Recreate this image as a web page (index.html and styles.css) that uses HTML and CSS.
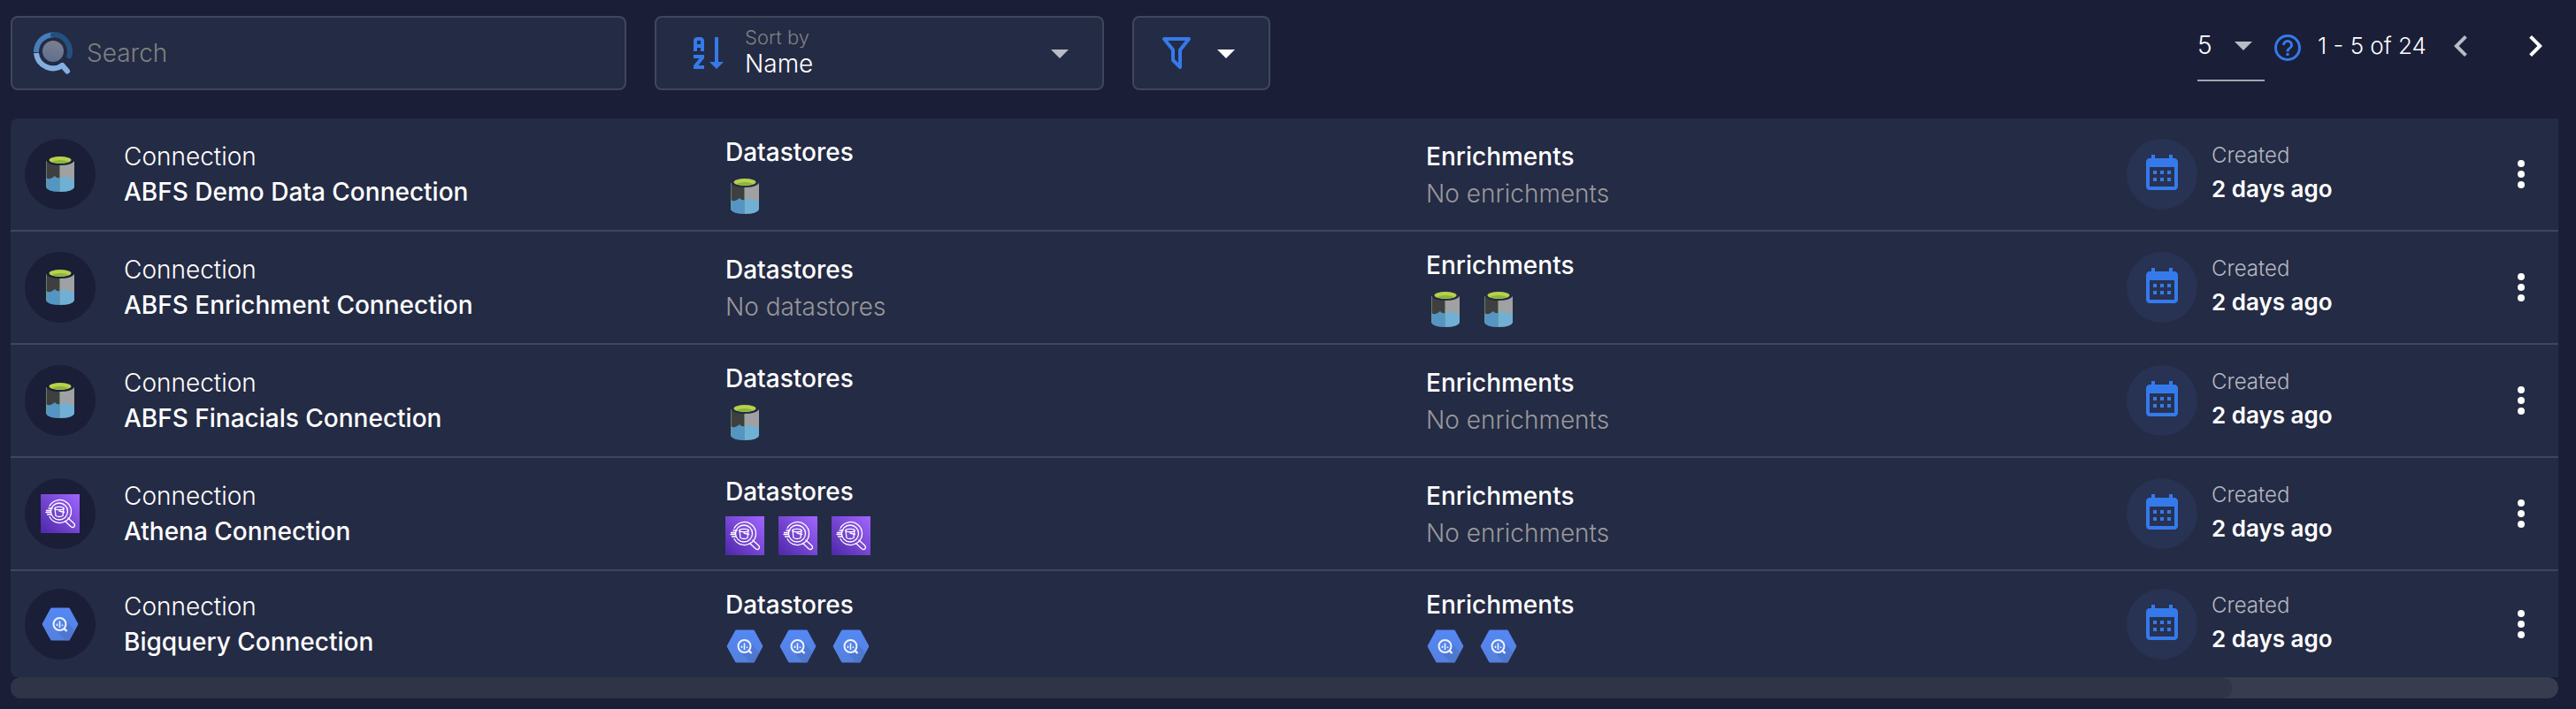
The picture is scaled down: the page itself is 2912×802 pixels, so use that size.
FILE: index.html
```html
<!DOCTYPE html>
<html lang="en">
<head>
<meta charset="utf-8">
<title>Connections</title>
<link rel="stylesheet" href="styles.css">
</head>
<body>
<svg class="defs" aria-hidden="true">
  <defs>
    <linearGradient id="athena-bg" x1="0" y1="1" x2="1" y2="0">
      <stop offset="0" stop-color="#4d27a8"/><stop offset="1" stop-color="#a166ff"/>
    </linearGradient>
    <linearGradient id="lens" x1="0.6" y1="0" x2="0.4" y2="1">
      <stop offset="0" stop-color="#7c7f8d"/><stop offset="1" stop-color="#5c7091"/>
    </linearGradient>
    <linearGradient id="bq-bg" x1="0" y1="0" x2="0" y2="1">
      <stop offset="0" stop-color="#5488f5"/><stop offset="1" stop-color="#5580dd"/>
    </linearGradient>
    <symbol id="abfs" viewBox="0 0 44 44">
      <path fill="#3f3f3f" d="M6 7Q9 12 22 12V28H6z"/>
      <path fill="#a0a1a2" d="M38 7Q35 12 22 12V28H38z"/>
      <path fill="#5595c4" d="M6 26Q9 28 11 27Q14 26 16 24Q18 27 22 26V42Q8 42 6 37z"/>
      <path fill="#70b0d5" d="M22 26Q25 26 28 24Q30 26 33 27Q35 28 38 26V37Q36 42 22 42z"/>
      <path fill="none" stroke="#6f9f80" stroke-opacity=".7" d="M6.500 7V37M21.500 12V41"/>
      <ellipse cx="22" cy="6" rx="12.500" ry="4" fill="#b9d04c"/>
      <path fill="#87b63c" d="M13 7.500Q22 4.500 31 7.500Q28 9.500 22 9.500Q16 9.500 13 7.500z"/>
    </symbol>
    <symbol id="athena" viewBox="0 0 44 44">
      <path fill="url(#athena-bg)" d="M0 0h44v44H0z"/>
      <g fill="none" stroke="#fff" stroke-width="1.300" stroke-linecap="round" stroke-linejoin="round">
        <path d="M10 13.500A13 13 0 1 1 10 25.500M9 16H13M6.500 18.500H11.500M6 20.500H11M7.500 23H12"/>
        <circle cx="21" cy="19.500" r="9.500"/>
        <ellipse cx="21" cy="16" rx="5" ry="1.700"/>
        <path d="M16 16L17 24.500Q21 26.500 25 24.500L26 16M21 19L26.500 20.500M27.500 30.500L34.500 37Q37.500 38.500 38.500 35.500Q38.500 34 37.500 33L31 27"/>
      </g>
    </symbol>
    <symbol id="bigquery" viewBox="0 0 44 38">
      <path fill="url(#bq-bg)" d="M12.500.500H31.500Q32.500.500 33 1.500L42 18Q42.500 19 42 20L33 36.500Q32.500 37.500 31.500 37.500H12.500Q11.500 37.500 11 36.500L2 20Q1.500 19 2 18L11 1.500Q11.500.500 12.500.500z"/>
      <path fill="#4b73c9" fill-opacity=".7" d="M27 13L38.500 26.500L32.500 37.500H28L17 25z"/>
      <circle cx="21.500" cy="19" r="7" fill="#5484e8" stroke="#eef3ff" stroke-width="2"/>
      <path fill="none" stroke="#eef3ff" stroke-width="1.600" d="M18.500 18.500V21M21.500 15.500V23M24.500 19.500V21"/>
      <path stroke="#eef3ff" stroke-width="2.400" d="M26.500 24L29.500 27"/>
    </symbol>
    <symbol id="calendar" viewBox="0 0 24 24">
      <path fill="currentColor" d="M9 10V12H7V10H9M13 10V12H11V10H13M17 10V12H15V10H17M19 3C20.100 3 21 3.900 21 5V19C21 20.100 20.100 21 19 21H5C3.900 21 3 20.100 3 19V5C3 3.900 3.900 3 5 3H6V1H8V3H16V1H18V3H19M19 19V8H5V19H19M9 14V16H7V14H9M13 14V16H11V14H13M17 14V16H15V14H17Z"/>
    </symbol>
    <symbol id="dots" viewBox="0 0 24 24">
      <path fill="currentColor" d="M12 16A2 2 0 1 1 12 20A2 2 0 0 1 12 16M12 10A2 2 0 1 1 12 14A2 2 0 0 1 12 10M12 4A2 2 0 1 1 12 8A2 2 0 0 1 12 4Z"/>
    </symbol>
    <symbol id="caret" viewBox="0 0 24 24"><path fill="currentColor" d="M7 10L12 15L17 10H7Z"/></symbol>
  </defs>
</svg>

<header class="toolbar">
  <label class="field search">
    <svg class="search-icon" viewBox="0 0 44 48" aria-hidden="true">
      <g fill="none" stroke-width="6" stroke-linecap="round" stroke-linejoin="round">
        <path stroke="#24507f" d="M22 3A19 19 0 0 1 40.200 27.500"/>
        <path stroke="#477db8" stroke-linecap="butt" d="M3 23A19 19 0 0 1 22 3.500"/>
        <path stroke="#84afe1" stroke-linecap="butt" d="M3 24A19 19 0 0 0 33 37.600"/>
        <path stroke="#84afe1" d="M32.500 38L38 44.500"/>
      </g>
      <circle cx="22" cy="3.500" r="3" fill="#24507f"/>
      <circle cx="22" cy="22" r="12" fill="url(#lens)"/>
    </svg>
    <input class="search-input" type="text" placeholder="Search" aria-label="Search">
  </label>

  <div class="field sort">
    <svg class="icon blue" viewBox="0 0 24 24" aria-hidden="true"><path fill="currentColor" d="M19 17H22L18 21L14 17H17V3H19V17M11 13V15L7.670 19H11V21H5V19L8.330 15H5V13H11M9 3H7C5.900 3 5 3.900 5 5V11H7V9H9V11H11V5C11 3.900 10.100 3 9 3M9 7H7V5H9V7Z"/></svg>
    <div class="sort-text">
      <label class="sort-label" for="sort">Sort by</label>
      <select class="plain-select" id="sort"><option>Name</option></select>
    </div>
    <svg class="icon muted" aria-hidden="true"><use href="#caret"/></svg>
  </div>

  <button class="field filter" type="button" aria-label="Filter">
    <svg class="funnel blue" viewBox="0 0 32 36" aria-hidden="true"><path fill="none" stroke="currentColor" stroke-width="4" stroke-linejoin="round" d="M2 2H30L20 14.500V34L12 26V14.500z"/></svg>
    <svg class="icon" aria-hidden="true"><use href="#caret"/></svg>
  </button>

  <nav class="pager" aria-label="Pagination">
    <div class="page-size">
      <select class="plain-select" aria-label="Rows per page"><option>5</option></select>
      <svg class="icon size-caret" aria-hidden="true"><use href="#caret"/></svg>
    </div>
    <svg class="help blue" viewBox="0 0 24 24" aria-hidden="true"><path fill="currentColor" d="M11 18H13V16H11V18M12 2A10 10 0 0 0 2 12A10 10 0 0 0 12 22A10 10 0 0 0 22 12A10 10 0 0 0 12 2M12 20C7.590 20 4 16.410 4 12S7.590 4 12 4S20 7.590 20 12S16.410 20 12 20M12 6A4 4 0 0 0 8 10H10A2 2 0 0 1 12 8A2 2 0 0 1 14 10C14 12 11 11.750 11 15H13C13 12.750 16 12.500 16 10A4 4 0 0 0 12 6Z"/></svg>
    <span class="range">1 - 5 of 24</span>
    <button class="icon-button muted" type="button" aria-label="Previous page"><svg class="icon" viewBox="0 0 24 24"><path fill="currentColor" d="M15.410 16.580L10.830 12L15.410 7.410L14 6L8 12L14 18L15.410 16.580Z"/></svg></button>
    <button class="icon-button next" type="button" aria-label="Next page"><svg class="icon" viewBox="0 0 24 24"><path fill="currentColor" d="M8.590 16.580L13.170 12L8.590 7.410L10 6L16 12L10 18L8.590 16.580Z"/></svg></button>
  </nav>
</header>

<main class="list">
  <table class="connections">
    <tbody id="rows"></tbody>
  </table>
  <div class="scrollbar"><div class="thumb"></div></div>
</main>
<script src="app.js"></script>
</body>
</html>
```
FILE: styles.css
```css
* { box-sizing: border-box; }

body {
  margin: 0;
  padding: 18px 20px 12px 12px;
  background: #1a1e37;
  color: #fff;
  font-family: Inter, "Open Sans", sans-serif;
  font-size: 28px;
  font-weight: 300;
  line-height: 40px;
}

.defs { position: absolute; width: 0; height: 0; }

input, select, button {
  margin: 0;
  padding: 0;
  border: 0;
  outline: 0;
  background: none;
  color: inherit;
  font: inherit;
}

svg { display: block; flex: none; }
.icon { width: 48px; height: 48px; }
.blue { color: #357aeb; }
.muted { color: #b9bcc5; }

.toolbar {
  display: flex;
  align-items: flex-start;
  gap: 32px;
  margin-bottom: 32px;
}

.field {
  display: flex;
  align-items: center;
  height: 84px;
  border: 2px solid #40465b;
  border-radius: 8px;
  background: #242b44;
}

.search { flex: 0 1 696px; gap: 16px; padding: 0 24px; }
.search-icon { width: 44px; height: 48px; }
.search-input { flex: 1; min-width: 0; height: 100%; }
.search-input::placeholder { color: #7f8082; opacity: 1; }

.sort { flex: 0 1 508px; gap: 20px; padding: 0 24px 0 32px; }
.sort-text { flex: 1; min-width: 0; display: flex; flex-direction: column; }
.sort-label { color: #7f8082; font-size: 22px; line-height: 24px; }

.plain-select {
  appearance: none;
  width: 100%;
  height: 36px;
  line-height: 36px;
}

.filter { gap: 16px; padding: 0 24px 0 32px; }
.funnel { width: 32px; height: 36px; }

.pager {
  display: flex;
  align-items: center;
  height: 68px;
  margin-left: auto;
  padding-right: 2px;
}

.page-size {
  display: flex;
  align-items: center;
  width: 76px;
  height: 80px;
  border-bottom: 2px solid #a4a5b1;
}
.page-size .plain-select { flex: 1; min-width: 0; }
.size-caret { color: #b9bcc5; }
.help { width: 36px; height: 36px; margin: 4px 16px 0 8px; }
.range { min-width: 138px; font-size: 26px; white-space: nowrap; }
.icon-button { cursor: pointer; }
.next { margin-left: 36px; }

.connections {
  width: 100%;
  table-layout: fixed;
  border-spacing: 0;
  border-radius: 8px 0 0 8px;
  background: #242b44;
}
.connections td {
  width: 27.5%;
  padding: 16px;
  vertical-align: middle;
  border-bottom: 2px solid #40465b;
}
.connections td:last-child { width: auto; }
.connections tr:last-child td { border-bottom: 0; }

.entity { display: flex; align-items: center; gap: 32px; }
.badge {
  display: flex;
  align-items: center;
  justify-content: center;
  width: 80px;
  height: 80px;
  border-radius: 50%;
  background: #1a1e37;
}
.name { font-weight: 500; }
.age { font-size: 26px; font-weight: 600; }
.heading { font-weight: 500; line-height: 44px; }
.none { color: #97989b; }
.stores { display: flex; gap: 16px; margin-top: 6px; }
.logo { width: 44px; height: 44px; }
.logo-bigquery { height: 38px; }

.created { display: flex; align-items: center; gap: 16px; }
.created .badge { background: #283252; color: #357aeb; }
.created-text { flex: 1; padding-bottom: 2px; }
.caption { color: #b4b7c1; font-size: 24px; line-height: 36px; }
.menu { margin-right: 2px; cursor: pointer; }

.scrollbar { height: 24px; border-radius: 12px; background: #373c4f; }
.thumb { width: 87.2%; height: 100%; border-radius: 12px; background: #2f3446; }
```
FILE: app.js
```js
const connections = [
  { name: "ABFS Demo Data Connection", logo: "abfs", datastores: 1, enrichments: 0 },
  { name: "ABFS Enrichment Connection", logo: "abfs", datastores: 0, enrichments: 2 },
  { name: "ABFS Finacials Connection", logo: "abfs", datastores: 1, enrichments: 0 },
  { name: "Athena Connection", logo: "athena", datastores: 3, enrichments: 0 },
  { name: "Bigquery Connection", logo: "bigquery", datastores: 3, enrichments: 2 }
];

const logo = id => `<svg class="logo logo-${id}" aria-hidden="true"><use href="#${id}"/></svg>`;

const stores = (title, id, count) => `
  <div class="heading">${title}</div>
  ${count
    ? `<div class="stores">${logo(id).repeat(count)}</div>`
    : `<div class="none">No ${title.toLowerCase()}</div>`}`;

document.getElementById("rows").innerHTML = connections.map(c => `
  <tr>
    <td><div class="entity">
      <div class="badge">${logo(c.logo)}</div>
      <div><div>Connection</div><div class="name">${c.name}</div></div>
    </div></td>
    <td>${stores("Datastores", c.logo, c.datastores)}</td>
    <td>${stores("Enrichments", c.logo, c.enrichments)}</td>
    <td><div class="created">
      <div class="badge"><svg class="icon" aria-hidden="true"><use href="#calendar"/></svg></div>
      <div class="created-text"><div class="caption">Created</div><div class="age">2 days ago</div></div>
      <button class="menu" type="button" aria-label="Actions for ${c.name}"><svg class="icon"><use href="#dots"/></svg></button>
    </div></td>
  </tr>`).join("");
```
